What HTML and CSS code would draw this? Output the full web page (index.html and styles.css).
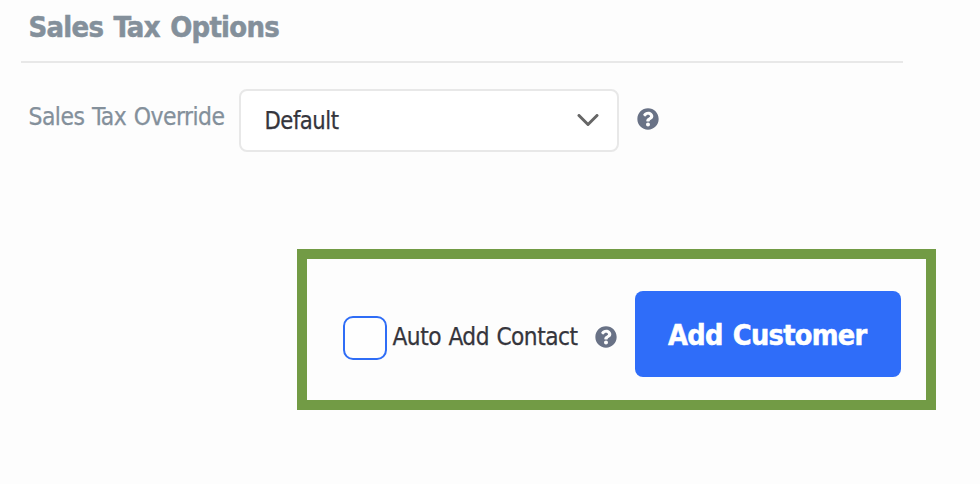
FILE: index.html
```html
<!DOCTYPE html>
<html lang="en">
<head>
<meta charset="utf-8">
<title>Sales Tax Options</title>
<link rel="stylesheet" href="styles.css">
</head>
<body>
<main class="page">
  <h2 class="heading"><svg class="fit" width="252" height="48"><text x="-0.500" y="37" textLength="250.500" lengthAdjust="spacingAndGlyphs">Sales Tax Options</text></svg></h2>
  <div class="field">
    <label class="field-label"><svg class="fit" width="198" height="40"><text x="-0.500" y="29" textLength="196" lengthAdjust="spacingAndGlyphs">Sales Tax Override</text></svg></label>
    <div class="select">
      <svg class="fit" width="80" height="40"><text x="-0.500" y="28" textLength="74" lengthAdjust="spacingAndGlyphs">Default</text></svg>
      <svg class="chevron" width="22" height="14" viewBox="0 0 22 14"><path d="M2 1.500l9 9L20 1.500"/></svg>
    </div>
    <svg class="help" width="22" height="22" viewBox="0 0 512 512"><path d="M504 256c0 137-111 248-248 248S8 393 8 256 119 8 256 8s248 111 248 248zM262.700 90c-54.500 0-89.300 23-116.500 63.800-3.500 5.300-2.400 12.400 2.700 16.300l34.700 26.300c5.200 3.900 12.600 3 16.700-2.100 17.900-22.700 30.100-35.800 57.300-35.800 20.400 0 45.700 13.100 45.700 33 0 15-12.400 22.700-32.500 34C247.100 238.500 216 254.900 216 296v4c0 6.600 5.400 12 12 12h56c6.600 0 12-5.400 12-12v-1.300c0-28.500 83.200-29.600 83.200-106.700 0-58-60.200-102-116.500-102zM256 338c-25.400 0-46 20.600-46 46s20.600 46 46 46 46-20.600 46-46-20.600-46-46-46z"/></svg>
  </div>
  <section class="actions">
    <span class="checkbox"></span>
    <label class="check-label"><svg class="fit" width="188" height="40"><text x="-0.500" y="27" textLength="185" lengthAdjust="spacingAndGlyphs">Auto Add Contact</text></svg></label>
    <svg class="help" width="22" height="22" viewBox="0 0 512 512"><path d="M504 256c0 137-111 248-248 248S8 393 8 256 119 8 256 8s248 111 248 248zM262.700 90c-54.500 0-89.300 23-116.500 63.800-3.500 5.300-2.400 12.400 2.700 16.300l34.700 26.300c5.200 3.900 12.600 3 16.700-2.100 17.900-22.700 30.100-35.800 57.300-35.800 20.400 0 45.700 13.100 45.700 33 0 15-12.400 22.700-32.500 34C247.100 238.500 216 254.900 216 296v4c0 6.600 5.400 12 12 12h56c6.600 0 12-5.400 12-12v-1.300c0-28.500 83.200-29.600 83.200-106.700 0-58-60.200-102-116.500-102zM256 338c-25.400 0-46 20.600-46 46s20.600 46 46 46 46-20.600 46-46-20.600-46-46-46z"/></svg>
    <button class="primary"><svg class="fit" width="200" height="40"><text x="0" y="31" textLength="198.500" lengthAdjust="spacingAndGlyphs">Add Customer</text></svg></button>
  </section>
</main>
</body>
</html>
```
FILE: styles.css
```css
* { box-sizing: border-box; }
body { margin: 0; background: #fdfdfd; font-family: "DejaVu Sans Condensed", "DejaVu Sans", sans-serif; font-size: 24px; color: #35353c; }
.page { width: 980px; height: 484px; overflow: hidden; }
.fit { display: block; overflow: visible; flex: none; }
.fit text { fill: currentColor; stroke: currentColor; stroke-width: 0.25px; letter-spacing: -0.5px; word-spacing: 1px; }
.heading { margin: 0 0 0 21px; padding-left: 8px; width: 882px; height: 63px; border-bottom: 2px solid #e8e8e8; color: #84909b; font-size: 28px; font-weight: 700; }
.heading text, .primary text { stroke-width: 0.5px; letter-spacing: -0.7px; word-spacing: 2px; }
.field { display: flex; align-items: flex-start; margin-top: 26px; padding-left: 29px; color: #84909b; }
.field-label { width: 210px; padding-top: 7px; }
.select { display: flex; align-items: center; justify-content: space-between; width: 380px; height: 63px; padding: 0 18px 0 24px; border: 2px solid #e8e8e8; border-radius: 8px; background: #fff; color: #35353c; }
.chevron { fill: none; stroke: #666; stroke-width: 3; stroke-linecap: round; stroke-linejoin: round; }
.help { fill: #697286; flex: none; }
.field .help { margin: 19px 0 0 18px; }
.actions { display: flex; width: 639px; height: 161px; margin: 97px 0 0 297px; border: 10px solid #729b45; padding: 32px 0 0 36px; }
.checkbox { width: 44px; height: 44px; margin-top: 25px; border: 2px solid #2f6df6; border-radius: 10px; background: #fefefe; }
.check-label { margin: 27px 0 0 6px; width: 185px; }
.actions .help { margin: 35px 0 0 17px; }
.primary { display: flex; align-items: center; justify-content: center; width: 266px; height: 86px; margin-left: 18px; padding: 0; border: 0; border-radius: 8px; background: #2f6df9; color: #fff; font-family: inherit; font-size: 28px; font-weight: 700; }
```
